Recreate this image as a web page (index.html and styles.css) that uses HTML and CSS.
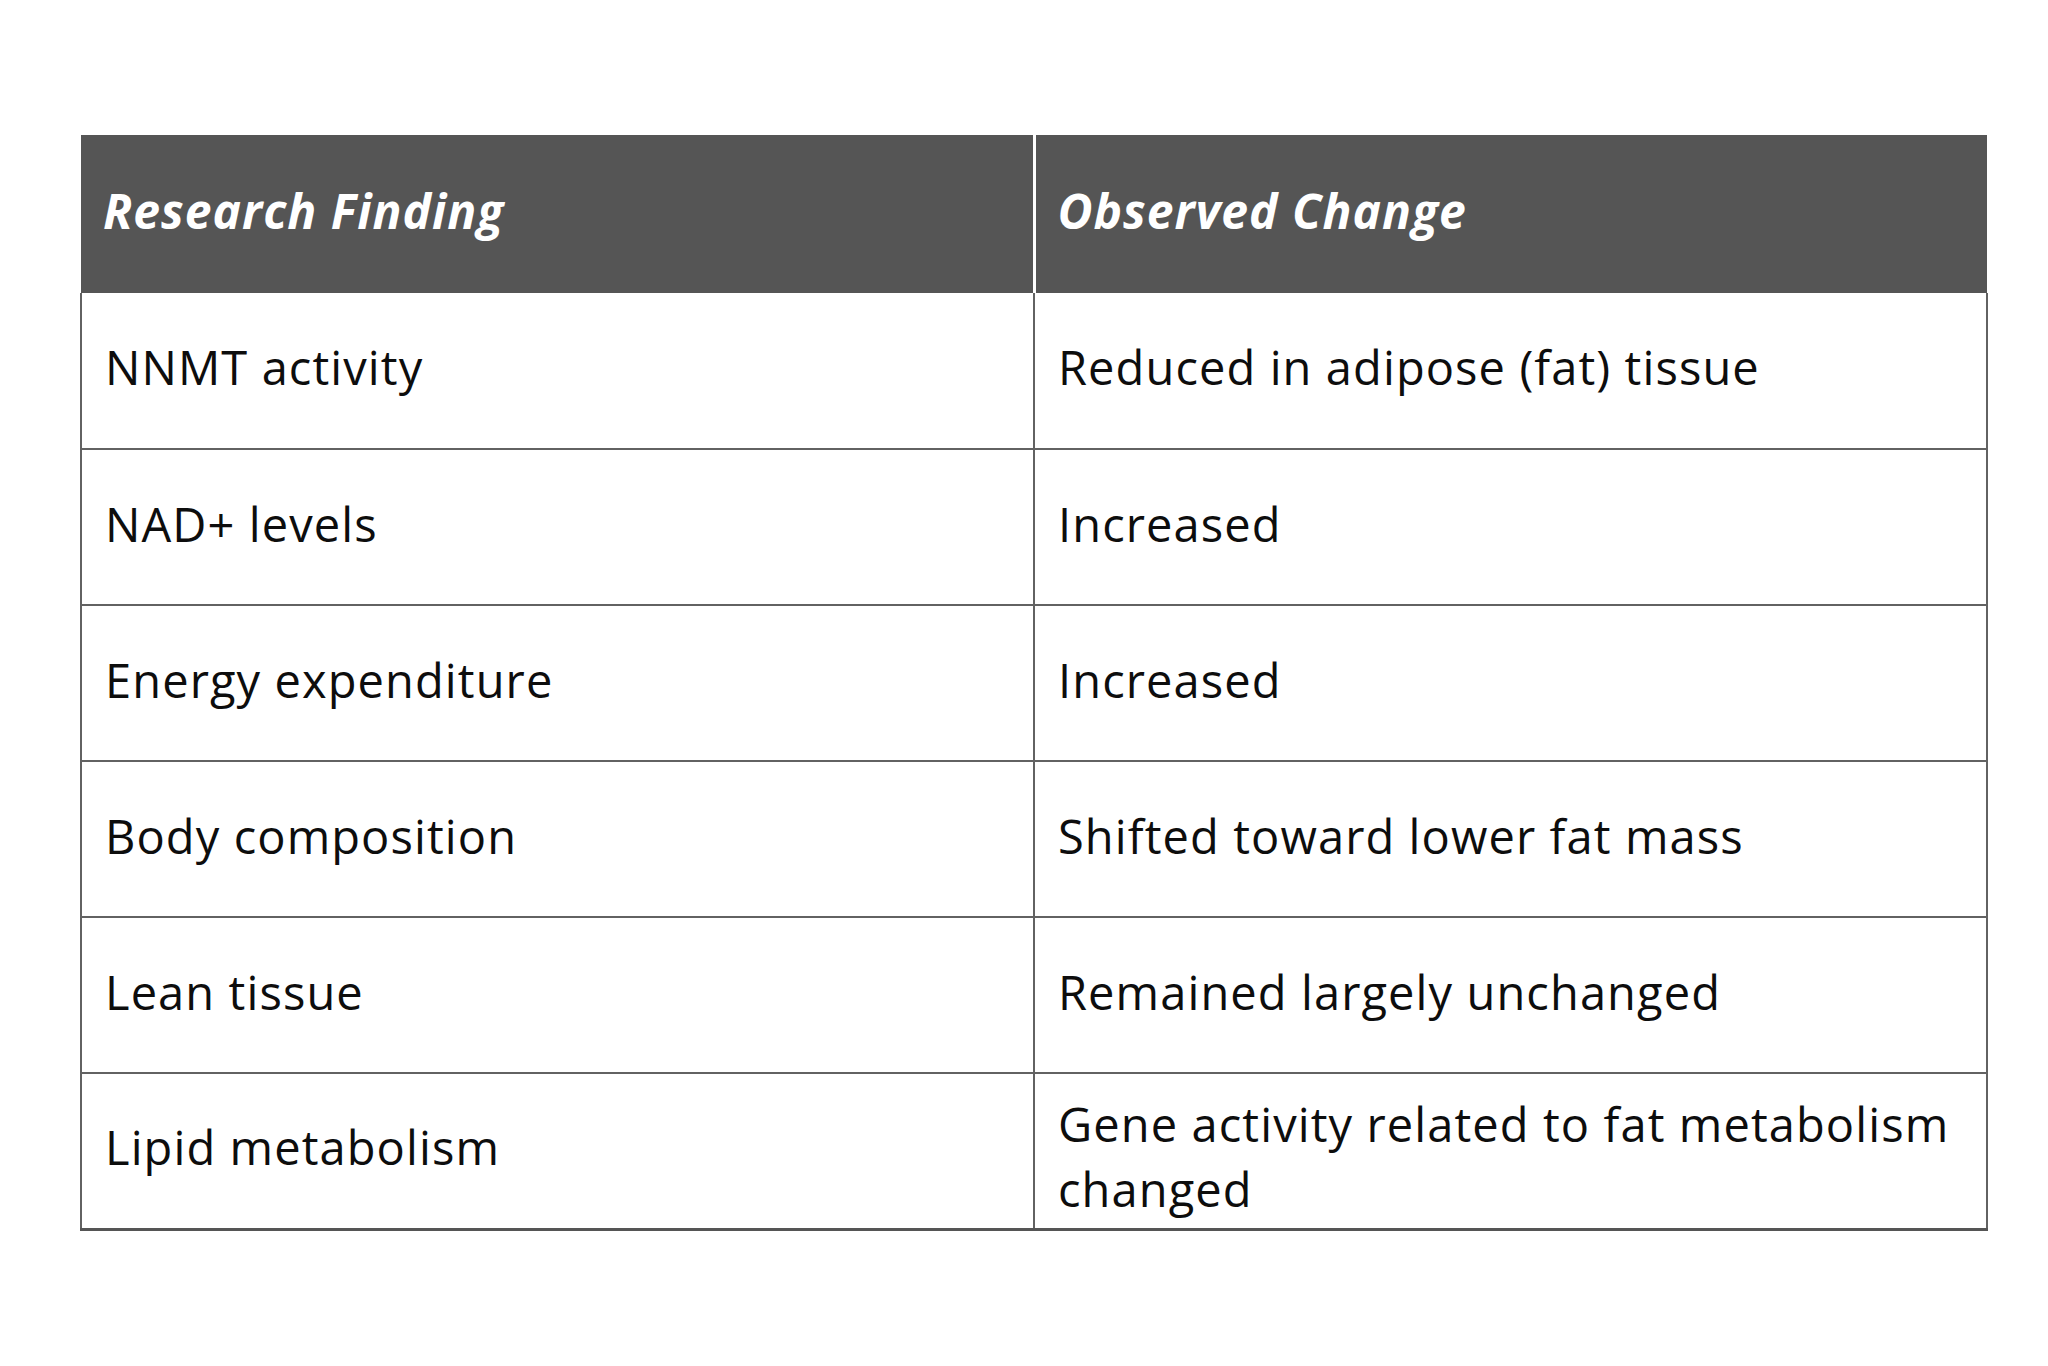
FILE: index.html
```html
<!DOCTYPE html>
<html lang="en">
<head>
<meta charset="utf-8">
<title>Research Findings</title>
<link rel="stylesheet" href="styles.css">
</head>
<body>
<main class="page">
  <table class="findings">
    <colgroup>
      <col class="col-finding">
      <col class="col-change">
    </colgroup>
    <thead>
      <tr>
        <th class="head-cell head-first">Research Finding</th>
        <th class="head-cell">Observed Change</th>
      </tr>
    </thead>
    <tbody>
      <tr><td>NNMT activity</td><td>Reduced in adipose (fat) tissue</td></tr>
      <tr><td>NAD+ levels</td><td>Increased</td></tr>
      <tr><td>Energy expenditure</td><td>Increased</td></tr>
      <tr><td>Body composition</td><td>Shifted toward lower fat mass</td></tr>
      <tr><td>Lean tissue</td><td>Remained largely unchanged</td></tr>
      <tr class="last-row"><td>Lipid metabolism</td><td class="wrap-cell">Gene activity related to fat metabolism changed</td></tr>
    </tbody>
  </table>
</main>
</body>
</html>
```
FILE: styles.css
```css
html, body {
  margin: 0;
  padding: 0;
  background: #ffffff;
}

.page {
  padding: 135px 0 0 80px;
}

.findings {
  width: 1908px;
  border-collapse: collapse;
  table-layout: fixed;
  font-family: "Open Sans", "Noto Sans", sans-serif;
}

.col-finding,
.col-change {
  width: 50%;
}

.head-cell {
  box-sizing: border-box;
  height: 158px;
  padding: 0 22px 6px 22px;
  background: #555555;
  color: #ffffff;
  text-align: left;
  vertical-align: middle;
  font-style: italic;
  font-weight: 700;
  font-size: 48px;
  letter-spacing: 1px;
  line-height: 60px;
  border: 0;
}

.head-first {
  border-right: 3px solid #ffffff;
}

.findings td {
  height: 156px;
  box-sizing: border-box;
  padding: 0 16px 6px 23px;
  border: 2px solid #626262;
  color: #0d0d0d;
  font-size: 47px;
  letter-spacing: 1.1px;
  line-height: 65px;
  vertical-align: middle;
}

.findings td.wrap-cell {
  padding-top: 12px;
  padding-bottom: 0;
}

.findings tbody tr:first-child td {
  border-top: 0;
}

.last-row td {
  border-bottom: 3px solid #555555;
}
```
